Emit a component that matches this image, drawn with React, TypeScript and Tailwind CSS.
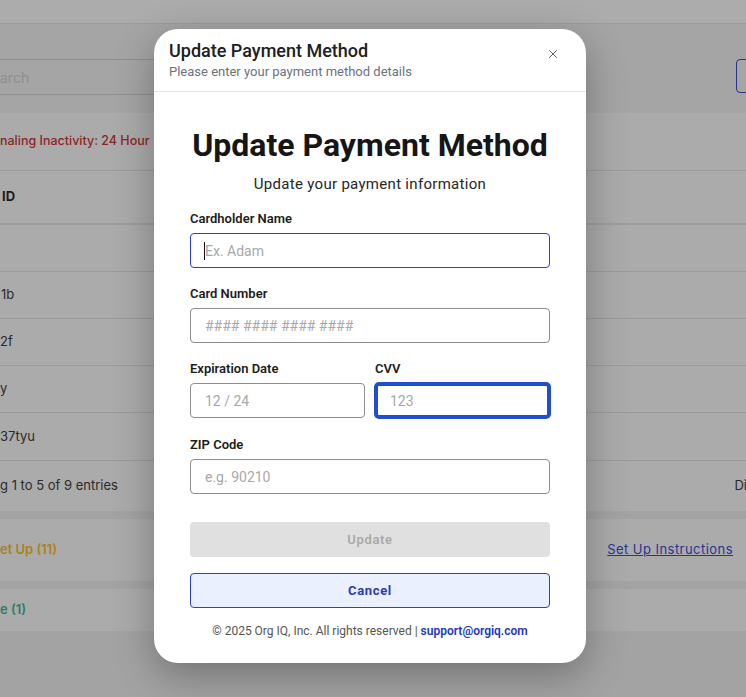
import React from 'react';
import { X } from 'lucide-react';

const Field: React.FC<{ label: string; placeholder: string; className?: string; inputClass?: string; caret?: boolean }> = ({
  label,
  placeholder,
  className = '',
  inputClass = 'border border-[#8e8e8e]',
  caret,
}) => (
  <div className={className}>
    <label className="block text-[13px] leading-5 font-semibold text-[#1c1c1c]">{label}</label>
    <div className="relative mt-1">
      <input
        placeholder={placeholder}
        className={`block h-[35px] w-full rounded-[4px] bg-white px-[14px] text-[14px] text-[#333] placeholder:text-[#a8a8a8] outline-none ${inputClass}`}
      />
      {caret && <span className="absolute left-[14px] top-[9px] h-[18px] w-px bg-[#111]" />}
    </div>
  </div>
);

const App: React.FC = () => {
  return (
    <div className="relative h-[697px] w-full overflow-hidden bg-[#a3a3a3] font-['Inter',sans-serif]">
      {/* dimmed page behind the dialog */}
      <div className="h-[24px] border-b border-[#9b9b9b] bg-[#acacac]" />
      <div className="flex h-[89px] items-start justify-between bg-[#a5a5a5] pt-[35px]">
        <div className="flex h-9 w-[170px] items-center border-y border-[#8f8f8f] text-[14px] text-[#8e8e8e]">arch</div>
        <div className="-mr-3 h-[34px] w-[22px] rounded-[4px] border border-[#27348a]" />
      </div>

      <div className="bg-[#ababab] text-[13px] text-[#2a2a2a]">
        <div className="flex h-[58px] items-center border-b border-[#9b9b9b] text-[12.5px] font-medium text-[#8a2626]">
          naling Inactivity: 24 Hour
        </div>
        <div className="flex h-[54px] items-center border-b-2 border-[#9d9d9d] pl-[2px] font-bold text-[#1d1d1d]">ID</div>
        <div className="h-[47px] border-b border-[#9b9b9b]" />
        <div className="flex h-[47px] items-center border-b border-[#9b9b9b] pl-[1px]">1b</div>
        <div className="flex h-[47px] items-center border-b border-[#9b9b9b]">2f</div>
        <div className="flex h-[47px] items-center border-b border-[#9b9b9b]">y</div>
        <div className="flex h-[48px] items-center border-b border-[#9b9b9b]">37tyu</div>
        <div className="flex h-[50px] items-center justify-between">
          <span>g 1 to 5 of 9 entries</span>
          <span className="-mr-[1px]">Di</span>
        </div>
      </div>

      <div className="mt-2 flex h-[62px] items-center justify-between bg-[#ababab] text-[13px]">
        <span className="font-semibold text-[#a8821c]">et Up (11)</span>
        <span className="mr-[13px] tracking-[0.035em] text-[#283591] underline">Set Up Instructions</span>
      </div>
      <div className="mt-2 flex h-[42px] items-center bg-[#ababab] text-[13px] font-semibold text-[#2f7c6a]">e (1)</div>

      {/* dialog */}
      <div className="absolute left-[154px] top-[29px] h-[634px] w-[432px] overflow-hidden rounded-[24px] bg-white font-['Roboto',sans-serif] shadow-[0_12px_40px_rgba(0,0,0,0.3)]">
        <div className="relative border-b border-[#e6e6e6] px-[15px] pb-[10px] pt-[10px]">
          <h2 className="text-[18px] leading-6 font-medium text-[#202020]">Update Payment Method</h2>
          <p className="text-[13px] leading-[18px] text-[#6b7280]">Please enter your payment method details</p>
          <button className="absolute right-[26px] top-[18px] text-[#555]">
            <X size={14} strokeWidth={1.6} />
          </button>
        </div>

        <div className="px-9 pt-[35px]">
          <h1 className="whitespace-nowrap text-center text-[32px] leading-9 font-bold text-[#161616]">Update Payment Method</h1>
          <p className="mt-[11px] text-center text-[15px] leading-5 tracking-[0.02em] text-[#262626]">Update your payment information</p>

          <div className="mt-[15px] flex flex-col gap-4">
            <Field label="Cardholder Name" placeholder="Ex. Adam" inputClass="border border-[#2a3fd4]" caret />
            <Field label="Card Number" placeholder="#### #### #### ####" />
            <div className="grid grid-cols-2 gap-[10px]">
              <Field label="Expiration Date" placeholder="12 / 24" />
              <Field
                label="CVV"
                placeholder="123"
                inputClass="border-[3px] border-[#1f4fcf] ring-1 ring-[#1f4fcf] !px-3"
              />
            </div>
            <Field label="ZIP Code" placeholder="e.g. 90210" className="mt-px" />
          </div>

          <button className="mt-[28px] block h-[35px] w-full rounded-[4px] bg-[#e0e0e0] text-[13px] font-semibold tracking-wider text-[#a9a9a9]">
            Update
          </button>
          <button className="mt-4 block h-[35px] w-full rounded-[4px] border border-[#2a3fd4] bg-[#eaf0fd] text-[13px] font-bold tracking-wider text-[#2b3bbf]">
            Cancel
          </button>
          <p className="mt-[15px] text-center text-[12px] leading-4 text-[#555]">
            © 2025 Org IQ, Inc. All rights reserved |{' '}
            <a className="font-semibold text-[#2236c9]">support@orgiq.com</a>
          </p>
        </div>
      </div>
    </div>
  );
};

export default App;
